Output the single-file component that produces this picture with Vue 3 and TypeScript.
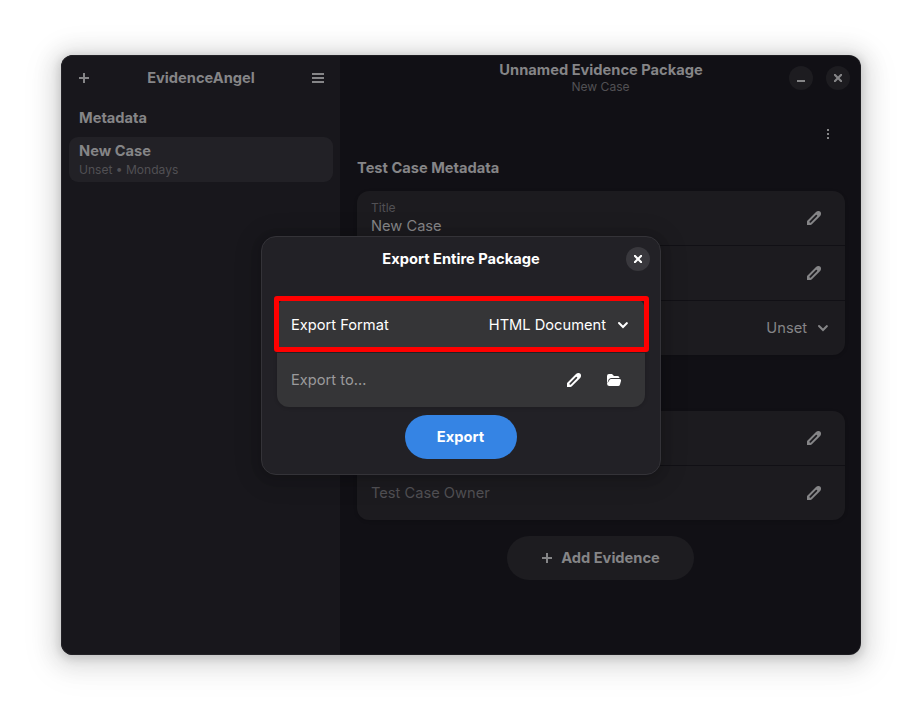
<script setup lang="ts">
import { defineComponent, h } from 'vue'

const paths: Record<string, string> = {
  plus: 'M7 3h2v4h4v2H9v4H7V9H3V7h4z',
  menu: 'M2 3h12v2H2zM2 7h12v2H2zM2 11h12v2H2z',
  minimize: 'M4 10h8v2H4z',
  close: 'M4 4h1.5L8 6.5 10.500 4H12v1.500L9.500 8l2.500 2.500V12h-1.500L8 9.500 5.500 12H4v-1.500L6.500 8 4 5.500z',
  more: 'M7 3h2v2H7zM7 7h2v2H7zM7 11h2v2H7z',
  pencil:
    'M1 15v-3.500C1 11 1.200 10.700 1.500 10.400L10 1.900C11 .9 13.400.7 14.400 1.700C15.400 2.700 15.200 5 14.200 6L5.600 14.500C5.300 14.800 5 15 4.500 15zM3.700 11.200a.8.8 0 0 0 1.200 1.200L11 6.300a.8.8 0 0 0-1.200-1.200z',
  chevron:
    'M3.300 5.300a1 1 0 0 1 1.400 0L8 8.600l3.300-3.300a1 1 0 0 1 1.400 1.400L8 11.400 3.300 6.700a1 1 0 0 1 0-1.400z',
  folder:
    'M3 2h3l2 2h3.500a2 2 0 0 1 2 2H5.500C3.600 6 2.800 7 2.400 8.200L1 12V4a2 2 0 0 1 2-2zM6 7h7.500a1.500 1.500 0 0 1 1.500 2l-1 3.500a2 2 0 0 1-2 1.500H3a2 2 0 0 1-1.900-2.200L3.200 8.500C3.700 7.400 4.500 7 6 7z',
}

const Icon = defineComponent({
  props: { name: { type: String, required: true } },
  setup(props) {
    return () =>
      h('svg', { width: 16, height: 16, viewBox: '0 0 16 16', fill: 'currentColor' }, [
        h('path', { d: paths[props.name], 'fill-rule': 'evenodd' }),
      ])
  },
})
</script>

<template>
  <div class="desktop">
    <div class="window">
      <aside class="sidebar">
        <header class="side-header">
          <Icon name="plus" />
          <strong>EvidenceAngel</strong>
          <Icon name="menu" />
        </header>
        <div class="side-heading">Metadata</div>
        <div class="case">
          <div class="case-name">New Case</div>
          <div class="case-sub">Unset • Mondays</div>
        </div>
      </aside>

      <main class="main">
        <header class="main-header">
          <div class="titles">
            <div class="title">Unnamed Evidence Package</div>
            <div class="subtitle">New Case</div>
          </div>
          <div class="controls">
            <span class="circle"><Icon name="minimize" /></span>
            <span class="circle"><Icon name="close" /></span>
          </div>
        </header>
        <div class="toolbar"><Icon name="more" /></div>
        <h2>Test Case Metadata</h2>
        <section class="card">
          <div class="row">
            <div class="field">
              <span class="label">Title</span>
              <span class="value">New Case</span>
            </div>
            <Icon name="pencil" class="edit" />
          </div>
          <div class="row end"><Icon name="pencil" class="edit" /></div>
          <div class="row end"><span class="choice">Unset</span><Icon name="chevron" /></div>
        </section>
        <section class="card second">
          <div class="row end"><Icon name="pencil" class="edit" /></div>
          <div class="row">
            <span class="placeholder">Test Case Owner</span>
            <Icon name="pencil" class="edit" />
          </div>
        </section>
        <button class="add"><Icon name="plus" />Add Evidence</button>
      </main>

      <div class="dialog">
        <header class="dialog-header">
          <span>Export Entire Package</span>
          <span class="circle dialog-close"><Icon name="close" /></span>
        </header>
        <section class="options">
          <div class="row">
            <span>Export Format</span>
            <span class="format">HTML Document<Icon name="chevron" /></span>
          </div>
          <div class="row">
            <span class="export-to">Export to…</span>
            <span class="actions"><Icon name="pencil" /><Icon name="folder" /></span>
          </div>
          <div class="highlight"></div>
        </section>
        <button class="export">Export</button>
      </div>
    </div>
  </div>
</template>

<style>
body {
  background: #fff;
}
</style>

<style scoped>
.desktop {
  box-sizing: border-box;
  width: 922px;
  height: 722px;
  padding: 55px 61px 67px;
  background: #fff;
  font: 14.667px/18px Inter, sans-serif;
  overflow: hidden;
}
.window {
  position: relative;
  display: flex;
  width: 800px;
  height: 600px;
  border-radius: 12px;
  background: #111015;
  color: #858587;
  box-shadow:
    0 2px 8px 2px rgba(0, 0, 0, 0.13),
    0 3px 20px 10px rgba(0, 0, 0, 0.09),
    0 6px 32px 16px rgba(0, 0, 0, 0.04);
}
.window::after {
  content: '';
  position: absolute;
  inset: 0;
  border-radius: 12px;
  box-shadow: inset 0 0 0 1px rgba(255, 255, 255, 0.05);
  pointer-events: none;
}
svg {
  display: block;
  flex: none;
}
.sidebar {
  box-sizing: border-box;
  width: 279px;
  padding: 0 7px 0 8px;
  border-radius: 12px 0 0 12px;
  background: #18171c;
}
.side-header {
  display: flex;
  align-items: center;
  justify-content: space-between;
  height: 46px;
  padding: 0 7px;
}
.side-heading {
  padding: 8px 10px 10px;
  font-weight: 700;
}
.case {
  box-sizing: border-box;
  height: 45px;
  padding: 5px 10px;
  border-radius: 9px;
  background: #222126;
}
.case-name {
  font-weight: 700;
}
.case-sub,
.subtitle,
.label {
  font-size: 12.05px;
  color: #515054;
}
.case-sub {
  padding-top: 1px;
}
.main {
  flex: 1;
  display: flex;
  flex-direction: column;
  padding: 0 16px 0 17px;
}
.main-header {
  position: relative;
  height: 47px;
}
.titles {
  padding-top: 6px;
  text-align: center;
}
.title {
  font-weight: 700;
}
.subtitle {
  padding-right: 1px;
  line-height: 15px;
}
.controls {
  position: absolute;
  right: -5px;
  top: 11px;
  display: flex;
  gap: 13px;
}
.circle {
  display: flex;
  align-items: center;
  justify-content: center;
  width: 24px;
  height: 24px;
  border-radius: 50%;
  background: #1d1c20;
}
.toolbar {
  display: flex;
  justify-content: flex-end;
  padding: 24px 9px 0 0;
}
h2 {
  margin: 17px 0 14px;
  font-size: inherit;
  line-height: 18px;
  font-weight: 700;
}
.card {
  border-radius: 12px;
  background: #1c1b1f;
  box-shadow: 0 1px 3px 1px rgba(0, 0, 0, 0.1);
}
.row {
  box-sizing: border-box;
  display: flex;
  align-items: center;
  justify-content: space-between;
  height: 54px;
  padding: 0 14px;
}
.row + .row {
  height: 55px;
  border-top: 1px solid #111015;
}
.row.end {
  justify-content: flex-end;
}
.edit {
  margin-right: 9px;
}
.field {
  display: flex;
  flex-direction: column;
}
.label {
  padding-bottom: 2px;
  line-height: 15px;
}
.value {
  line-height: 19px;
}
.choice {
  margin-right: 8px;
}
.placeholder {
  color: #515054;
}
.second {
  margin-top: 56px;
}
button {
  display: flex;
  align-items: center;
  justify-content: center;
  box-sizing: border-box;
  height: 44px;
  padding: 0;
  border: 0;
  border-radius: 22px;
  color: inherit;
  font: inherit;
  font-weight: 700;
}
.add {
  align-self: center;
  gap: 6px;
  width: 187px;
  margin: 16px 1px 0 0;
  padding-right: 2px;
  background: #1d1c20;
}
.dialog {
  position: absolute;
  left: 200px;
  top: 181px;
  box-sizing: border-box;
  display: flex;
  flex-direction: column;
  width: 400px;
  height: 239px;
  padding: 0 15px;
  border: 1px solid #343338;
  border-radius: 15px;
  background: #222126;
  color: #fff;
  box-shadow:
    0 2px 8px 2px rgba(0, 0, 0, 0.13),
    0 3px 20px 10px rgba(0, 0, 0, 0.09);
}
.dialog-header {
  position: relative;
  height: 61px;
  padding-top: 13px;
  box-sizing: border-box;
  text-align: center;
  font-weight: 700;
}
.dialog-close {
  position: absolute;
  top: 10px;
  right: -5px;
  background: #39383d;
}
.options {
  position: relative;
  border-radius: 12px;
  background: #353537;
  box-shadow: 0 1px 3px 1px rgba(0, 0, 0, 0.1);
}
.options .row + .row {
  border-color: #222126;
}
.format {
  display: flex;
  align-items: center;
  gap: 9px;
}
.export-to {
  color: #9b9b9c;
}
.actions {
  display: flex;
  gap: 24px;
  padding-right: 9px;
}
.highlight {
  position: absolute;
  left: -3px;
  top: -2px;
  box-sizing: border-box;
  width: 375px;
  height: 56px;
  border: 5px solid #f00;
  border-radius: 3px;
}
.export {
  align-self: center;
  width: 112px;
  margin-top: 8px;
  padding-right: 1px;
  background: #3584e4;
}
</style>
